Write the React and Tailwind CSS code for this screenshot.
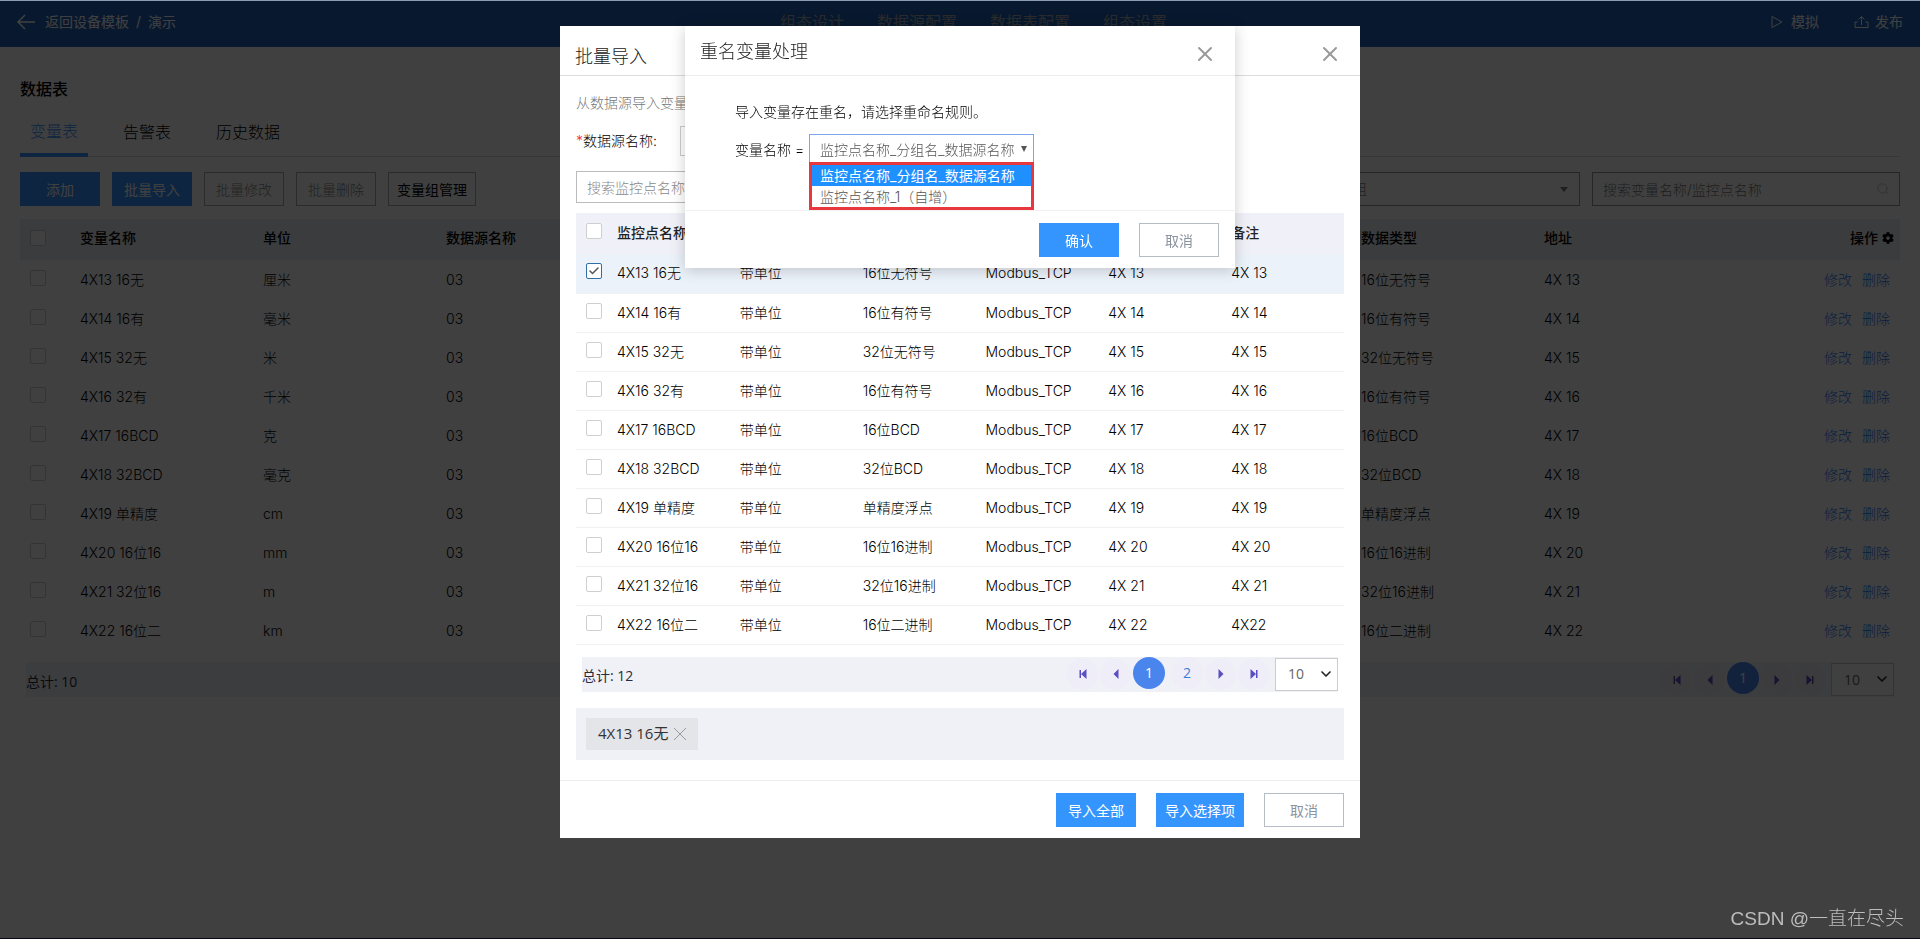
'use client'

import { useState } from 'react'
import { Check, ChevronDown, Search, X } from 'lucide-react'
import { FaCog } from 'react-icons/fa'

const variables = [
  { name: '4X13 16无', unit: '厘米', type: '16位无符号', address: '4X 13' },
  { name: '4X14 16有', unit: '毫米', type: '16位有符号', address: '4X 14' },
  { name: '4X15 32无', unit: '米', type: '32位无符号', address: '4X 15' },
  { name: '4X16 32有', unit: '千米', type: '16位有符号', address: '4X 16' },
  { name: '4X17 16BCD', unit: '克', type: '16位BCD', address: '4X 17' },
  { name: '4X18 32BCD', unit: '毫克', type: '32位BCD', address: '4X 18' },
  { name: '4X19 单精度', unit: 'cm', type: '单精度浮点', address: '4X 19' },
  { name: '4X20 16位16', unit: 'mm', type: '16位16进制', address: '4X 20' },
  { name: '4X21 32位16', unit: 'm', type: '32位16进制', address: '4X 21' },
  { name: '4X22 16位二', unit: 'km', type: '16位二进制', address: '4X 22' },
]

const renameRules = ['监控点名称_分组名_数据源名称', '监控点名称_1（自增）']

function Checkbox({ label, checked, onChange }) {
  return (
    <span className="relative block size-4">
      <input
        type="checkbox"
        aria-label={label}
        checked={checked}
        onChange={onChange}
        className="block size-4 appearance-none rounded-xs border border-[#cfcfcf] bg-white checked:border-[#2f6fa8]"
      />
      {checked && (
        <Check className="pointer-events-none absolute top-0.5 left-0.5 size-3 text-[#555]" strokeWidth={3} />
      )}
    </span>
  )
}

function PrimaryButton({ children, wide }) {
  return (
    <button
      type="button"
      className={`h-[34px] bg-[#3595ff] pt-0.5 text-sm font-normal text-white ${wide ? 'w-[88px]' : 'w-20'}`}
    >
      {children}
    </button>
  )
}

function PlainButton({ children }) {
  return (
    <button type="button" className="h-[34px] w-20 border border-[#b4bcc6] bg-white pt-0.5 text-sm font-normal text-[#8a93a0]">
      {children}
    </button>
  )
}

function PageArrow({ label, children }) {
  return (
    <button
      type="button"
      aria-label={label}
      className="flex size-[31px] items-center justify-center rounded-full bg-[#efedf8] text-[#5a4fc0]"
    >
      <svg viewBox="0 0 10 10" className="size-2.5 fill-current">
        {children}
      </svg>
    </button>
  )
}

// Total on the left, page buttons and page size on the right
function Pagination({ total, pages }) {
  return (
    <div className="mx-1.5 mt-3 flex h-[35px] items-center justify-between bg-[#f0f1f7] font-['Open_Sans','Noto_Sans_CJK_SC',sans-serif] text-sm font-normal text-[#2b2b3a]">
      <span className="pt-1">总计: {total}</span>
      <div className="flex h-full items-center gap-0.5">
        <PageArrow label="首页">
          <path d="M1.5 1H3v8H1.5zM8.5 0v10L3 5z" />
        </PageArrow>
        <PageArrow label="上一页">
          <path d="M7.5 0v10L2.5 5z" />
        </PageArrow>
        {pages.map((page) =>
          page === 1 ? (
            <button key={page} type="button" className="size-8 self-start rounded-full bg-[#4a85ee] text-white">
              {page}
            </button>
          ) : (
            <button key={page} type="button" className="ml-1 size-8 self-start rounded-full bg-[#efedf8] text-[#3b7dd8]">
              {page}
            </button>
          ),
        )}
        <PageArrow label="下一页">
          <path d="M2.5 0v10l5-5z" />
        </PageArrow>
        <PageArrow label="末页">
          <path d="M1.5 0v10L7 5zM7 1h1.5v8H7z" />
        </PageArrow>
        <div className="relative ml-1">
          <select
            aria-label="每页条数"
            defaultValue="10"
            className="block h-[33px] w-[63px] appearance-none border border-[#ccc] bg-white pl-3 text-[#666]"
          >
            <option>10</option>
          </select>
          <ChevronDown className="pointer-events-none absolute top-2 right-1 size-4 text-[#222]" strokeWidth={2.5} />
        </div>
      </div>
    </div>
  )
}

function Header() {
  return (
    <header className="flex h-[46px] items-center justify-between bg-[#2064bc] px-[17px] pb-1 text-sm leading-5 font-normal text-white">
      <div className="flex items-center">
        <a href="#" className="flex items-center gap-2.5">
          <svg viewBox="0 0 18 16" className="h-4 w-[18px] fill-none stroke-current stroke-[1.5]">
            <path d="M8 1 1 8l7 7M1 8h17" />
          </svg>
          返回设备模板
        </a>
        <span className="px-[7px]">/</span>
        <span>演示</span>
      </div>
      <nav className="flex gap-[33px] text-base text-[#a6aab0]">
        <a href="#">组态设计</a>
        <a href="#">数据源配置</a>
        <a href="#">数据表配置</a>
        <a href="#">组态设置</a>
      </nav>
      <div className="flex gap-[35px]">
        <button type="button" className="flex items-center gap-2">
          <svg viewBox="0 0 12 14" className="h-3.5 w-3 fill-none stroke-current">
            <path d="M1 1.500v11L11 7z" strokeLinejoin="round" />
          </svg>
          模拟
        </button>
        <button type="button" className="flex items-center gap-1.5">
          <svg viewBox="0 0 15 14" className="h-3.5 w-[15px] fill-none stroke-current">
            <path d="M3.500 7H1v5.500h13V7h-2.500M7.500 10V1.500M4.500 4.500l3-3 3 3" />
          </svg>
          发布
        </button>
      </div>
    </header>
  )
}

function VariablePage() {
  return (
    <main className="px-5 pt-[30px]">
      <h1 className="text-base leading-6 font-medium">数据表</h1>
      <div className="mt-2 flex gap-[25px] border-b border-[#dcdcdc] text-base">
        <button type="button" className="-mb-px h-12 border-b-4 border-[#3595ff] px-2.5 text-[#3595ff]">
          变量表
        </button>
        <button type="button" className="h-[47px] px-2.5 pb-0.5">告警表</button>
        <button type="button" className="h-[47px] px-2.5 pb-0.5">历史数据</button>
      </div>

      {/* Toolbar */}
      <div className="mt-[15px] flex gap-3 text-sm">
        <PrimaryButton>添加</PrimaryButton>
        <PrimaryButton>批量导入</PrimaryButton>
        <button type="button" className="h-[34px] w-20 border border-[#aaa] pt-0.5 text-[#888]">批量修改</button>
        <button type="button" className="h-[34px] w-20 border border-[#aaa] pt-0.5 text-[#888]">批量删除</button>
        <button type="button" className="h-[34px] w-[88px] border border-[#aaa] pt-0.5 font-normal">变量组管理</button>
        <div className="relative ml-auto w-[308px]">
          <select aria-label="变量组" className="h-[34px] w-full appearance-none border border-[#999] px-2.5 text-[#888]">
            <option>请选择变量组</option>
          </select>
          <svg viewBox="0 0 8 5" className="pointer-events-none absolute top-[15px] right-3 h-[5px] w-2 fill-[#777]">
            <path d="M0 0h8L4 5z" />
          </svg>
        </div>
        <div className="relative w-[308px]">
          <input
            type="text"
            aria-label="搜索变量"
            placeholder="搜索变量名称/监控点名称"
            className="h-[34px] w-full border border-[#999] px-2.5 placeholder:text-[#777]"
          />
          <Search className="pointer-events-none absolute top-2.5 right-2.5 size-3.5 text-[#bbb]" strokeWidth={1.5} />
        </div>
      </div>

      <table className="mt-[13px] w-full table-fixed text-left text-sm">
        <thead>
          <tr className="h-[41px] bg-[#eceef4]">
            <th className="w-[50px] pb-1 pl-2.5"><Checkbox label="全选" /></th>
            <th className="pb-1 pl-2.5 font-medium">变量名称</th>
            <th className="pb-1 pl-2.5 font-medium">单位</th>
            <th className="pb-1 pl-2.5 font-medium">数据源名称</th>
            <th colSpan={4}></th>
            <th className="pb-1 pl-2.5 font-medium">数据类型</th>
            <th className="pb-1 pl-2.5 font-medium">地址</th>
            <th className="pr-1.5 pb-1 font-medium">
              <span className="flex items-center justify-end gap-1">
                操作
                <FaCog className="size-3" />
              </span>
            </th>
          </tr>
        </thead>
        <tbody>
          {variables.map((row) => (
            <tr key={row.name} className="h-[39px]">
              <td className="pb-1 pl-2.5"><Checkbox label={row.name} /></td>
              <td className="pl-2.5">{row.name}</td>
              <td className="pl-2.5">{row.unit}</td>
              <td className="pl-2.5">03</td>
              <td colSpan={4}></td>
              <td className="pl-2.5">{row.type}</td>
              <td className="pl-2.5">{row.address}</td>
              <td className="pr-2.5 text-right text-[#2d7dff]">
                <a href="#">修改</a>
                <a href="#" className="ml-2.5">删除</a>
              </td>
            </tr>
          ))}
        </tbody>
      </table>
      <Pagination total={10} pages={[1]} />
    </main>
  )
}

function ImportDialog() {
  const [selected, setSelected] = useState(['4X13 16无'])

  const toggle = (name) => {
    setSelected(selected.includes(name) ? selected.filter((n) => n !== name) : [...selected, name])
  }

  return (
    <section role="dialog" aria-label="批量导入" className="w-[800px] max-w-full bg-white">
      <div className="flex h-[50px] items-center justify-between border-b border-[#ddd] pr-[18px] pl-[15px]">
        <h2 className="pt-3 text-lg text-[#222]">批量导入</h2>
        <button type="button" aria-label="关闭" className="pt-1.5">
          <X className="size-6 text-[#999]" strokeWidth={2} />
        </button>
      </div>

      <div className="px-4 pt-[15px] pb-5 text-sm">
        <p className="leading-6 text-[#777]">从数据源导入变量</p>
        <div className="mt-[11px] flex items-center">
          <label htmlFor="source" className="w-[104px]">
            <span className="text-red-500">*</span>数据源名称:
          </label>
          <input id="source" type="text" className="h-[30px] w-80 border border-[#ccc] px-2.5" />
        </div>
        <input
          type="text"
          aria-label="搜索监控点"
          placeholder="搜索监控点名称"
          className="mt-[15px] block h-8 w-80 border border-[#bbb] px-2.5 placeholder:text-[#888]"
        />

        <table className="mt-2.5 w-full table-fixed text-left">
          <thead>
            <tr className="h-[41px] bg-[#f0f1f8] text-[#222]">
              <th className="w-[31px] pb-1.5 pl-2.5"><Checkbox label="全选" /></th>
              <th className="pb-0.5 pl-2.5 font-medium whitespace-nowrap">监控点名称</th>
              <th colSpan={4}></th>
              <th className="pb-0.5 pl-2.5 font-medium">备注</th>
            </tr>
          </thead>
          <tbody>
            {variables.map((row) => (
              <tr
                key={row.name}
                className={`h-[39px] border-b border-[#f1f1f1] ${selected.includes(row.name) ? 'bg-[#ecf2fa]' : ''}`}
              >
                <td className="pb-1 pl-2.5">
                  <Checkbox label={row.name} checked={selected.includes(row.name)} onChange={() => toggle(row.name)} />
                </td>
                <td className="pl-2.5">{row.name}</td>
                <td className="pl-2.5">带单位</td>
                <td className="pl-2.5">{row.type}</td>
                <td className="pl-2.5">Modbus_TCP</td>
                <td className="pl-2.5">{row.address}</td>
                <td className="pl-2.5">{row.name.startsWith('4X22') ? '4X22' : row.address}</td>
              </tr>
            ))}
          </tbody>
        </table>
        <Pagination total={12} pages={[1, 2]} />

        {/* Chosen points */}
        <div className="mt-4 flex h-[52px] items-center gap-2.5 bg-[#f0f1f6] px-2.5">
          {selected.map((name) => (
            <span
              key={name}
              className="flex h-8 items-center gap-1.5 bg-[#e3e5e9] px-3 font-['Open_Sans','Noto_Sans_CJK_SC',sans-serif] text-[15px] font-normal text-[#333]"
            >
              {name}
              <button type="button" aria-label={`移除 ${name}`} onClick={() => toggle(name)}>
                <svg viewBox="0 0 12 12" className="size-3 fill-none stroke-[#999]">
                  <path d="m0 0 12 12M12 0 0 12" />
                </svg>
              </button>
            </span>
          ))}
        </div>
      </div>

      <div className="flex justify-end gap-5 border-t border-[#eee] px-4 pt-3 pb-[11px]">
        <PrimaryButton>导入全部</PrimaryButton>
        <PrimaryButton wide>导入选择项</PrimaryButton>
        <PlainButton>取消</PlainButton>
      </div>
    </section>
  )
}

function RenameDialog() {
  const [rule, setRule] = useState(renameRules[0])

  return (
    <section role="dialog" aria-label="重名变量处理" className="w-[550px] max-w-full bg-white shadow-[0_2px_14px_rgba(0,0,0,0.2)]">
      <div className="flex h-[50px] items-center justify-between border-b border-[#eee] pr-[18px] pl-[15px]">
        <h2 className="pt-0.5 text-lg text-[#222]">重名变量处理</h2>
        <button type="button" aria-label="关闭" className="pt-1.5">
          <X className="size-6 text-[#999]" strokeWidth={2} />
        </button>
      </div>

      <div className="h-[134px] px-[50px] pt-6 text-sm text-black">
        <p className="leading-6">导入变量存在重名，请选择重命名规则。</p>
        <div className="mt-2.5 flex items-center gap-1">
          <label htmlFor="rule" className="w-[70px] whitespace-nowrap">变量名称 =</label>
          <div className="relative w-[225px]">
            <select
              id="rule"
              value={rule}
              onChange={(e) => setRule(e.target.value)}
              className="block h-[31px] w-full appearance-none border border-[#7fa6ea] bg-white px-2.5 text-[#555]"
            >
              {renameRules.map((item) => (
                <option key={item}>{item}</option>
              ))}
            </select>
            <svg viewBox="0 0 6 6" className="pointer-events-none absolute top-3 right-[7px] size-1.5 fill-[#555]">
              <path d="M0 0h6L3 6z" />
            </svg>
            <ul role="listbox" className="absolute top-7 left-0 w-full border-3 border-[#e8383d] bg-white leading-[22px]">
              {renameRules.map((item) => (
                <li
                  key={item}
                  role="option"
                  aria-selected={item === rule}
                  onClick={() => setRule(item)}
                  className={`h-[21px] px-2 whitespace-nowrap ${item === rule ? 'bg-[#1e90ff] font-normal text-white' : 'text-[#555]'}`}
                >
                  {item}
                </li>
              ))}
            </ul>
          </div>
        </div>
      </div>

      <div className="flex justify-end gap-5 border-t border-[#f1f1f1] px-4 pt-3 pb-[11px]">
        <PrimaryButton>确认</PrimaryButton>
        <PlainButton>取消</PlainButton>
      </div>
    </section>
  )
}

export default function App() {
  return (
    <div className="min-h-screen bg-white pt-px font-['Inter','Noto_Sans_CJK_SC',sans-serif] font-light text-black">
      <Header />
      <VariablePage />

      {/* Dialogs */}
      <div className="fixed inset-0 bg-black/75" />
      <div className="fixed inset-x-0 top-0 h-px bg-[#8f9bb0]" />
      <div className="fixed inset-x-0 bottom-0 h-px bg-[#060914]" />
      <div className="fixed inset-x-0 top-[26px] flex justify-center">
        <ImportDialog />
      </div>
      <div className="fixed inset-x-0 top-[26px] flex justify-center">
        <RenameDialog />
      </div>

      <p className="fixed right-4 bottom-1.5 font-['Liberation_Sans','Noto_Sans_CJK_SC',sans-serif] text-[19px] leading-7 text-[#bdbdbd]">
        CSDN @一直在尽头
      </p>
    </div>
  )
}
